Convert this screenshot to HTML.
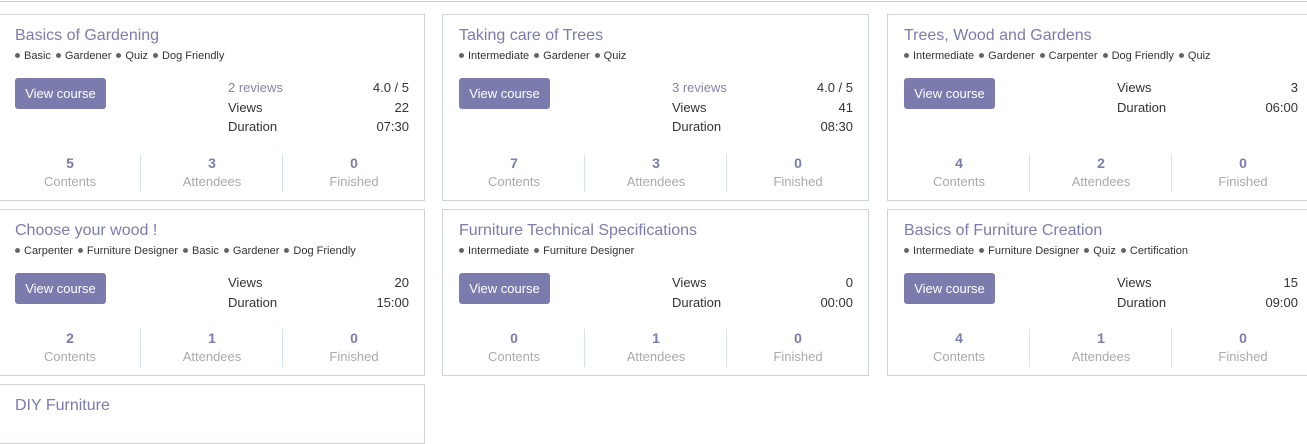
<!DOCTYPE html><html><head><style>
body{margin:0;width:1307px;height:401px;overflow:hidden;background:#fff;font-family:"Liberation Sans",sans-serif;position:relative}
.top{position:absolute;left:0;right:0;top:1px;height:1px;background:#ccc}
.c{position:absolute;width:427px;border:1px solid #d0d3d8;background:#fff;box-sizing:border-box}
.t{position:absolute;left:16px;top:12px;font-size:16px;color:#7c7bad;white-space:nowrap}
.g{position:absolute;left:16px;top:35px;font-size:11px;color:#333;white-space:nowrap}
.g i{display:inline-block;width:5px;height:5px;border-radius:50%;background:#666;margin:0 4px 1px 0;vertical-align:middle}
.g span{margin-right:5px}
.b{position:absolute;left:16px;top:63px;width:91px;height:31px;background:#7c7bad;border-radius:3px;color:#fff;font-size:13px;line-height:31px;text-align:center}
.s{position:absolute;left:229px;right:15px;font-size:13px;color:#333;height:20px;line-height:20px}
.s b{font-weight:normal;float:right}
.s.r{color:#8584ad}.s.r b{color:#333}
.n{position:absolute;width:142px;text-align:center;font-size:13px}
.n div:first-child{color:#7c7bad;font-weight:bold;font-size:14px}
.n div+div{color:#aaa;margin-top:3px}
.d{position:absolute;width:1px;height:38px;background:#d3e3ef}
</style></head><body><div class="top"></div>

<div class="c" style="left:-2px;top:14px;height:187px">
<div class="t">Basics of Gardening</div>
<div class="g"><span><i></i>Basic</span><span><i></i>Gardener</span><span><i></i>Quiz</span><span><i></i>Dog Friendly</span></div>
<div class="b">View course</div>
<div class="s r" style="top:63px">2 reviews<b>4.0 / 5</b></div>
<div class="s" style="top:83px">Views<b>22</b></div>
<div class="s" style="top:102px">Duration<b>07:30</b></div>
<div class="n" style="left:0;top:140px"><div>5</div><div>Contents</div></div>
<div class="n" style="left:142px;top:140px"><div>3</div><div>Attendees</div></div>
<div class="n" style="left:284px;top:140px"><div>0</div><div>Finished</div></div>
<div class="d" style="left:141px;top:139px"></div><div class="d" style="left:283px;top:139px"></div></div>

<div class="c" style="left:442px;top:14px;height:187px">
<div class="t">Taking care of Trees</div>
<div class="g"><span><i></i>Intermediate</span><span><i></i>Gardener</span><span><i></i>Quiz</span></div>
<div class="b">View course</div>
<div class="s r" style="top:63px">3 reviews<b>4.0 / 5</b></div>
<div class="s" style="top:83px">Views<b>41</b></div>
<div class="s" style="top:102px">Duration<b>08:30</b></div>
<div class="n" style="left:0;top:140px"><div>7</div><div>Contents</div></div>
<div class="n" style="left:142px;top:140px"><div>3</div><div>Attendees</div></div>
<div class="n" style="left:284px;top:140px"><div>0</div><div>Finished</div></div>
<div class="d" style="left:141px;top:139px"></div><div class="d" style="left:283px;top:139px"></div></div>

<div class="c" style="left:887px;top:14px;height:187px">
<div class="t">Trees, Wood and Gardens</div>
<div class="g"><span><i></i>Intermediate</span><span><i></i>Gardener</span><span><i></i>Carpenter</span><span><i></i>Dog Friendly</span><span><i></i>Quiz</span></div>
<div class="b">View course</div>
<div class="s" style="top:63px">Views<b>3</b></div>
<div class="s" style="top:83px">Duration<b>06:00</b></div>
<div class="n" style="left:0;top:140px"><div>4</div><div>Contents</div></div>
<div class="n" style="left:142px;top:140px"><div>2</div><div>Attendees</div></div>
<div class="n" style="left:284px;top:140px"><div>0</div><div>Finished</div></div>
<div class="d" style="left:141px;top:139px"></div><div class="d" style="left:283px;top:139px"></div></div>

<div class="c" style="left:-2px;top:209px;height:167px">
<div class="t">Choose your wood !</div>
<div class="g"><span><i></i>Carpenter</span><span><i></i>Furniture Designer</span><span><i></i>Basic</span><span><i></i>Gardener</span><span><i></i>Dog Friendly</span></div>
<div class="b">View course</div>
<div class="s" style="top:63px">Views<b>20</b></div>
<div class="s" style="top:83px">Duration<b>15:00</b></div>
<div class="n" style="left:0;top:120px"><div>2</div><div>Contents</div></div>
<div class="n" style="left:142px;top:120px"><div>1</div><div>Attendees</div></div>
<div class="n" style="left:284px;top:120px"><div>0</div><div>Finished</div></div>
<div class="d" style="left:141px;top:119px"></div><div class="d" style="left:283px;top:119px"></div></div>

<div class="c" style="left:442px;top:209px;height:167px">
<div class="t">Furniture Technical Specifications</div>
<div class="g"><span><i></i>Intermediate</span><span><i></i>Furniture Designer</span></div>
<div class="b">View course</div>
<div class="s" style="top:63px">Views<b>0</b></div>
<div class="s" style="top:83px">Duration<b>00:00</b></div>
<div class="n" style="left:0;top:120px"><div>0</div><div>Contents</div></div>
<div class="n" style="left:142px;top:120px"><div>1</div><div>Attendees</div></div>
<div class="n" style="left:284px;top:120px"><div>0</div><div>Finished</div></div>
<div class="d" style="left:141px;top:119px"></div><div class="d" style="left:283px;top:119px"></div></div>

<div class="c" style="left:887px;top:209px;height:167px">
<div class="t">Basics of Furniture Creation</div>
<div class="g"><span><i></i>Intermediate</span><span><i></i>Furniture Designer</span><span><i></i>Quiz</span><span><i></i>Certification</span></div>
<div class="b">View course</div>
<div class="s" style="top:63px">Views<b>15</b></div>
<div class="s" style="top:83px">Duration<b>09:00</b></div>
<div class="n" style="left:0;top:120px"><div>4</div><div>Contents</div></div>
<div class="n" style="left:142px;top:120px"><div>1</div><div>Attendees</div></div>
<div class="n" style="left:284px;top:120px"><div>0</div><div>Finished</div></div>
<div class="d" style="left:141px;top:119px"></div><div class="d" style="left:283px;top:119px"></div></div>

<div class="c" style="left:-2px;top:384px;height:60px">
<div class="t">DIY Furniture</div></div>
</body></html>
